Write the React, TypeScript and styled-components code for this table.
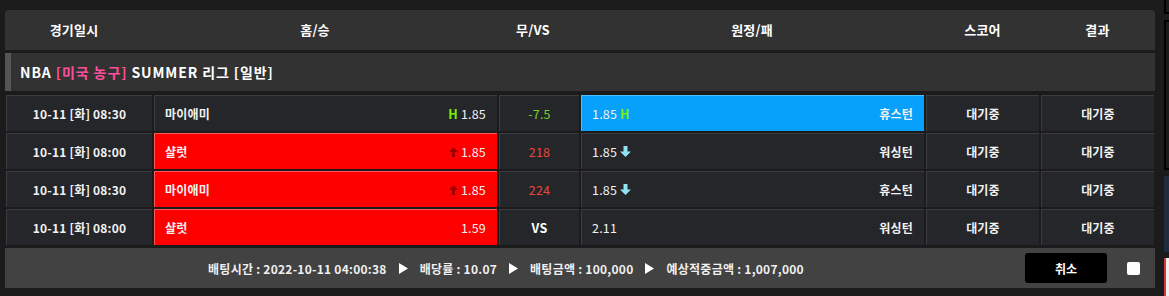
import styled, { createGlobalStyle } from "styled-components";

const GlobalStyle = createGlobalStyle`
  body {
    margin: 0;
    background: #1b1b1b;
    font-family: "Noto Sans CJK KR", "Noto Sans", sans-serif;
    color: #fff;
  }
`;

type Tone = "dark" | "red" | "blue";

type Game = {
  date: string;
  home: string;
  homeOdds: string;
  homeMark?: "H" | "up";
  draw: string;
  drawColor: string;
  away: string;
  awayOdds: string;
  awayMark?: "H" | "down";
  pick: "home" | "away";
};

const games: Game[] = [
  { date: "10-11 [화] 08:30", home: "마이애미", homeOdds: "1.85", homeMark: "H", draw: "-7.5", drawColor: "#72d82a", away: "휴스턴", awayOdds: "1.85", awayMark: "H", pick: "away" },
  { date: "10-11 [화] 08:00", home: "샬럿", homeOdds: "1.85", homeMark: "up", draw: "218", drawColor: "#e8463c", away: "워싱턴", awayOdds: "1.85", awayMark: "down", pick: "home" },
  { date: "10-11 [화] 08:30", home: "마이애미", homeOdds: "1.85", homeMark: "up", draw: "224", drawColor: "#e8463c", away: "휴스턴", awayOdds: "1.85", awayMark: "down", pick: "home" },
  { date: "10-11 [화] 08:00", home: "샬럿", homeOdds: "1.59", draw: "VS", drawColor: "#ffffff", away: "워싱턴", awayOdds: "2.11", pick: "home" },
];

const UpArrow = () => (
  <svg width="9" height="10" viewBox="0 0 9 10">
    <path d="M4.5 0 L9 5 H6 V10 H3 V5 H0 Z" fill="#a10000" />
  </svg>
);

const DownArrow = () => (
  <svg width="11" height="11" viewBox="0 0 11 11">
    <path d="M5.5 11 L11 5.5 H7.5 V0 H3.5 V5.5 H0 Z" fill="#8fe3f0" />
  </svg>
);

const Play = () => (
  <svg width="9" height="11" viewBox="0 0 9 11">
    <path d="M0 0 L9 5.5 L0 11 Z" fill="#ffffff" />
  </svg>
);

function Mark({ kind }: { kind?: "H" | "up" | "down" }) {
  if (kind === "H") return <HMark>H</HMark>;
  if (kind === "up") return <UpArrow />;
  if (kind === "down") return <DownArrow />;
  return null;
}

export default function App() {
  return (
    <Page>
      <GlobalStyle />
      <Main>
        <HeaderRow>
          <span>경기일시</span>
          <span>홈/승</span>
          <span>무/VS</span>
          <span>원정/패</span>
          <span>스코어</span>
          <span>결과</span>
        </HeaderRow>
        <LeagueRow>
          NBA&nbsp;<Pink>[미국 농구]</Pink>&nbsp;SUMMER 리그 [일반]
        </LeagueRow>
        <Body>
          {games.map((g, i) => (
            <GameRow key={i}>
              <Cell $tone="dark" $align="center">{g.date}</Cell>
              <Cell $tone={g.pick === "home" ? "red" : "dark"} $align="between">
                <span>{g.home}</span>
                <Odds>
                  <Mark kind={g.homeMark} />
                  {g.homeOdds}
                </Odds>
              </Cell>
              <Cell $tone="dark" $align="center">
                <DrawValue $color={g.drawColor}>{g.draw}</DrawValue>
              </Cell>
              <Cell $tone={g.pick === "away" ? "blue" : "dark"} $align="between">
                <Odds>
                  {g.awayOdds}
                  <Mark kind={g.awayMark} />
                </Odds>
                <span>{g.away}</span>
              </Cell>
              <Cell $tone="dark" $align="center">대기중</Cell>
              <Cell $tone="dark" $align="center">대기중</Cell>
            </GameRow>
          ))}
        </Body>
        <Footer>
          <Summary>
            <span>배팅시간 : 2022-10-11 04:00:38</span>
            <Play />
            <span>배당률 : 10.07</span>
            <Play />
            <span>배팅금액 : 100,000</span>
            <Play />
            <span>예상적중금액 : 1,007,000</span>
          </Summary>
          <CancelButton>취소</CancelButton>
          <CheckBox type="checkbox" />
        </Footer>
      </Main>
      <Aside>
        <AsideTop />
        <AsideBox />
        <AsideNavy />
        <AsideRed />
      </Aside>
    </Page>
  );
}

const Page = styled.div`
  display: flex;
  align-items: flex-start;
  width: 1169px;
  height: 296px;
  overflow: hidden;
`;

const Main = styled.div`
  margin: 10px 0 0 5px;
  width: 1150px;
  display: flex;
  flex-direction: column;
`;

const HeaderRow = styled.div`
  display: grid;
  grid-template-columns: 138px 344px 92px 346px 115px 115px;
  height: 40px;
  align-items: center;
  justify-items: center;
  background: #323232;
  border-radius: 4px 4px 0 0;
  font-size: 13px;
  font-weight: 700;
  line-height: 16px;
  letter-spacing: 0.2px;
  padding-bottom: 1px;
  box-sizing: border-box;
`;

const LeagueRow = styled.div`
  margin-top: 3px;
  height: 38px;
  display: flex;
  align-items: center;
  background: #323232;
  border-left: 6px solid #555555;
  padding-left: 9px;
  font-size: 14px;
  font-weight: 700;
  line-height: 17px;
  letter-spacing: 0.9px;
  white-space: nowrap;
`;

const Pink = styled.span`
  color: #ff4f9b;
`;

const Body = styled.div`
  margin-top: 4px;
  padding: 0 1px;
  display: flex;
  flex-direction: column;
  gap: 2px;
`;

const GameRow = styled.div`
  display: grid;
  grid-template-columns: 146px 343px 80px 343px 113px 113px;
  column-gap: 2px;
  height: 36px;
`;

const toneBg: Record<Tone, string> = {
  dark: "#242629",
  red: "#ff0000",
  blue: "#07a0fb",
};

const toneEdge: Record<Tone, string> = {
  dark: "#3a3c3f",
  red: "#ff5a5a",
  blue: "#4cc0ff",
};

const Cell = styled.div<{ $tone: Tone; $align: "center" | "between" }>`
  display: flex;
  align-items: center;
  justify-content: ${(p) => (p.$align === "center" ? "center" : "space-between")};
  padding: 0 ${(p) => (p.$align === "center" ? "0" : "11px 0 10px")};
  background: ${(p) => toneBg[p.$tone]};
  border-top: 1px solid ${(p) => toneEdge[p.$tone]};
  border-left: 1px solid ${(p) => toneEdge[p.$tone]};
  box-sizing: border-box;
  font-size: 12px;
  font-weight: 700;
  line-height: 15px;
  letter-spacing: 0.2px;
  color: #f2f2f2;
  white-space: nowrap;
`;

const Odds = styled.span`
  display: flex;
  align-items: center;
  gap: 3px;
  font-weight: 400;
  font-size: 12.5px;
`;

const DrawValue = styled.span<{ $color: string }>`
  color: ${(p) => p.$color};
  font-weight: ${(p) => (p.$color === "#ffffff" ? 700 : 400)};
  font-size: 12.5px;
`;

const HMark = styled.span`
  color: #7cf000;
  font-weight: 700;
`;

const Footer = styled.div`
  margin-top: 3px;
  height: 40px;
  display: flex;
  align-items: center;
  background: #424242;
`;

const Summary = styled.div`
  flex: 1;
  display: flex;
  align-items: center;
  justify-content: center;
  gap: 12px;
  padding-right: 8px;
  font-size: 12px;
  font-weight: 700;
  line-height: 15px;
  letter-spacing: 0.25px;
  color: #f0f0f0;
  white-space: nowrap;
`;

const CancelButton = styled.button`
  width: 82px;
  height: 30px;
  margin-left: 10px;
  background: #000;
  border: none;
  border-radius: 3px;
  color: #fff;
  font-family: inherit;
  font-size: 12px;
  font-weight: 700;
  padding: 0;
`;

const CheckBox = styled.input`
  appearance: none;
  width: 13px;
  height: 13px;
  margin: 0 15px 0 20px;
  background: #fff;
  border-radius: 2px;
`;

const Aside = styled.div`
  margin-left: 9px;
  width: 5px;
  display: flex;
  flex-direction: column;
`;

const AsideTop = styled.div`
  height: 14px;
  border-left: 2px solid #000;
  border-bottom: 2px solid #000;
  box-sizing: border-box;
`;

const AsideBox = styled.div`
  margin-top: 6px;
  height: 150px;
  border: 2px solid #000;
  border-right: none;
  box-sizing: border-box;
`;

const AsideNavy = styled.div`
  margin-top: 6px;
  height: 76px;
  background: #1f2b3e;
`;

const AsideRed = styled.div`
  margin-top: 6px;
  height: 40px;
  background: linear-gradient(90deg, #d83a3a 40%, #f0f0f0 40%);
`;
